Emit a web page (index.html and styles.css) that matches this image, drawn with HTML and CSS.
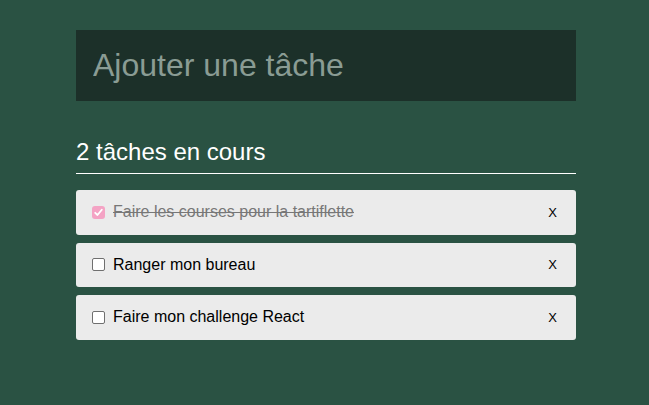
FILE: index.html
```html
<!DOCTYPE html>
<html lang="fr">
<head>
<meta charset="utf-8">
<link rel="stylesheet" href="styles.css">
</head>
<body>
<main class="app">
  <input class="new-task" type="text" placeholder="Ajouter une tâche">
  <h2 class="count">2 tâches en cours</h2>
  <ul class="list">
    <li class="item done">
      <label class="label"><input class="check" type="checkbox" checked><span class="text">Faire les courses pour la tartiflette</span></label>
      <button class="del">X</button>
    </li>
    <li class="item">
      <label class="label"><input class="check" type="checkbox"><span class="text">Ranger mon bureau</span></label>
      <button class="del">X</button>
    </li>
    <li class="item">
      <label class="label"><input class="check" type="checkbox"><span class="text">Faire mon challenge React</span></label>
      <button class="del">X</button>
    </li>
  </ul>
</main>
</body>
</html>
```
FILE: styles.css
```css
html, body {
  margin: 0;
  padding: 0;
}
body {
  background: #2a5243;
  font-family: "Liberation Sans", Arial, sans-serif;
  height: 405px;
}
.app {
  width: 500px;
  margin: 0 0 0 76px;
  padding-top: 30px;
  display: flex;
  flex-direction: column;
}
.new-task {
  box-sizing: border-box;
  height: 71px;
  width: 100%;
  border: none;
  outline: none;
  background: #1c3029;
  color: #fff;
  font-family: inherit;
  font-size: 32px;
  padding: 0 17px;
}
.new-task::placeholder {
  color: #8a9c94;
}
.count {
  margin: 37px 0 16px;
  padding-bottom: 7px;
  border-bottom: 1px solid #fff;
  color: #fff;
  font-weight: normal;
  font-size: 24px;
  line-height: normal;
}
.list {
  list-style: none;
  margin: 0;
  padding: 0;
  display: flex;
  flex-direction: column;
  gap: 8px;
}
.item {
  background: #ebebeb;
  border-radius: 3px;
  height: 44.5px;
  display: flex;
  align-items: center;
  padding: 0 13px 0 16px;
  font-size: 16px;
  color: #000;
}
.label {
  flex: 1;
  display: flex;
  align-items: center;
}
.check {
  appearance: none;
  -webkit-appearance: none;
  box-sizing: border-box;
  margin: 0 8px 0 0;
  width: 13px;
  height: 13px;
  border: 1px solid #6f6f6f;
  border-radius: 2px;
  background: #fff;
}
.check:checked {
  border: none;
  border-radius: 3px;
  background: #f4a3c4 url("data:image/svg+xml;utf8,<svg xmlns='http://www.w3.org/2000/svg' viewBox='0 0 13 13'><path d='M3.2 6.8 L5.5 9 L9.8 3.8' fill='none' stroke='white' stroke-width='1.8' stroke-linecap='round' stroke-linejoin='round'/></svg>") center/13px 13px no-repeat;
}
.done .text {
  text-decoration: line-through;
  color: #777;
}
.del {
  border: none;
  background: transparent;
  font-family: inherit;
  font-size: 13px;
  padding: 2px 6px;
  color: #000;
}
```
